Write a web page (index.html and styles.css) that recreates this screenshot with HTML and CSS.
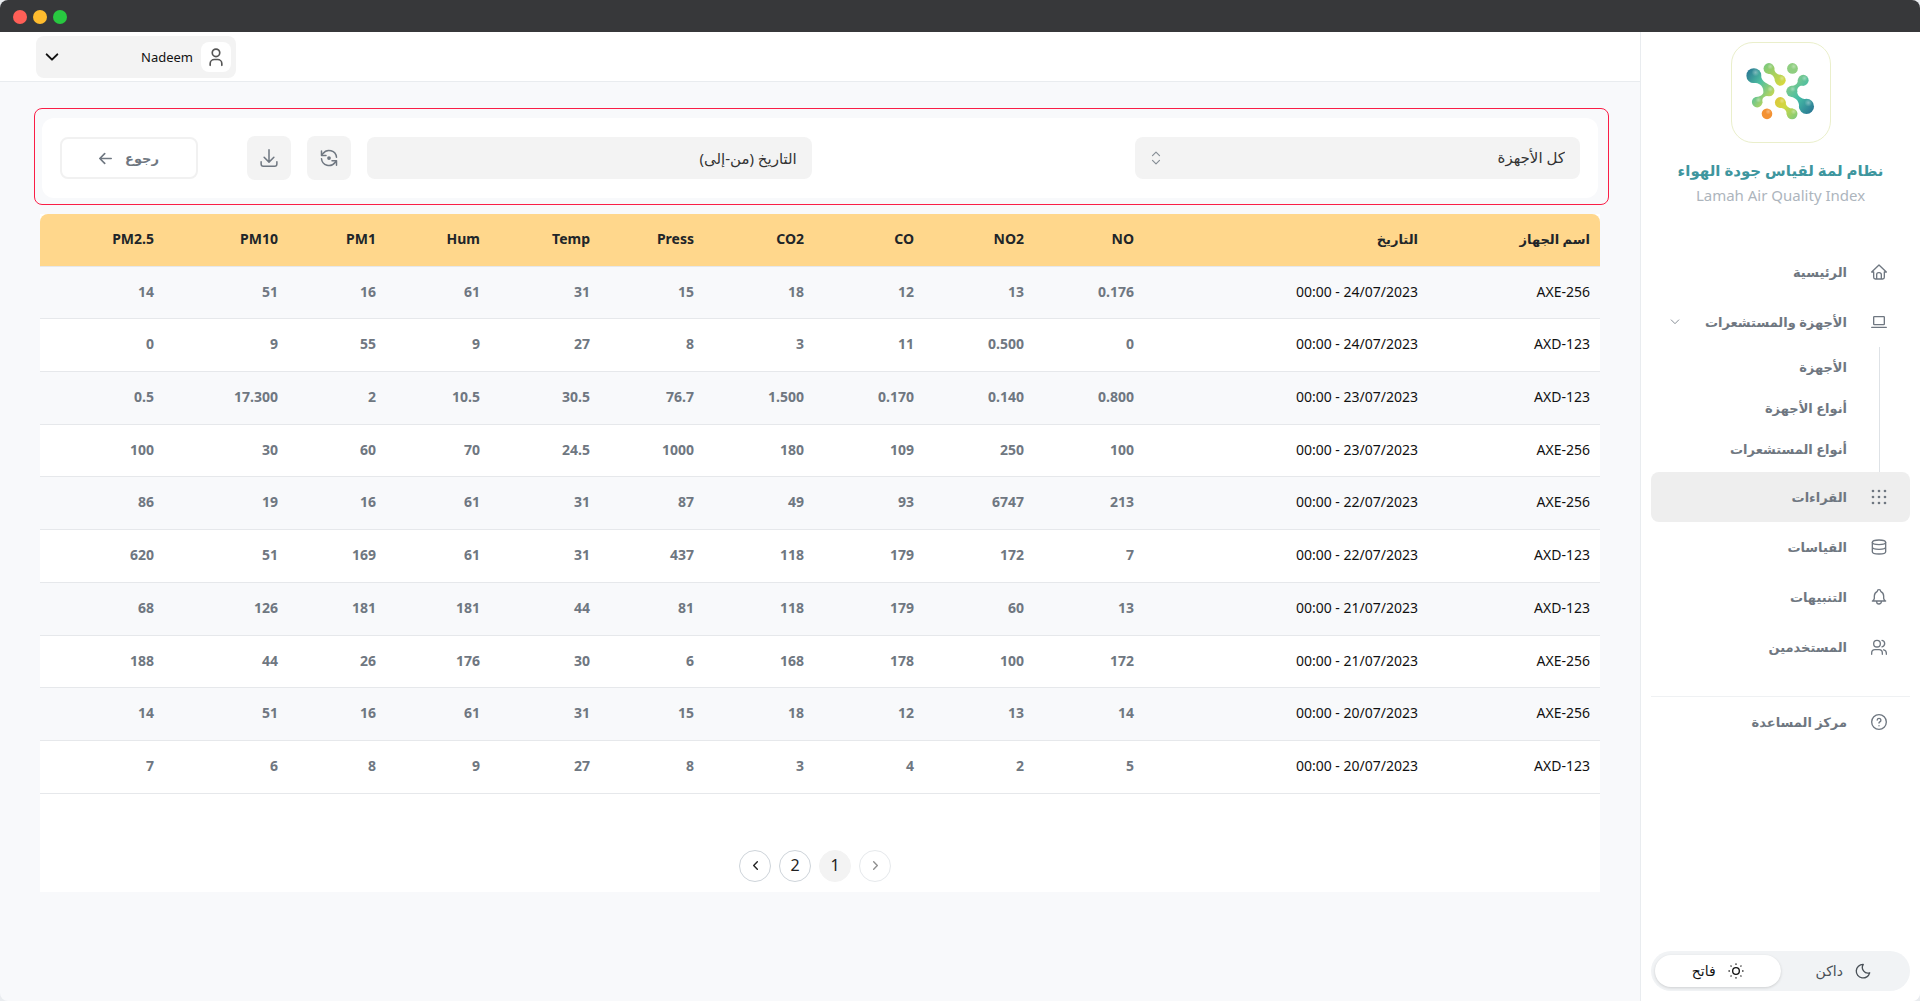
FILE: index.html
```html
<!DOCTYPE html>
<html lang="ar" dir="rtl">
<head>
    <title>نظام لمة لقياس جودة الهواء</title>
    <meta charset="UTF-8">
    <link rel="stylesheet" href="styles.css">
</head>
<body>
    <div class="titlebar">
        <span class="dot green"></span>
        <span class="dot yellow"></span>
        <span class="dot red"></span>
    </div>

    <div class="app">
        <aside class="sidebar">
            <div class="logo">
                <svg viewBox="0 0 100 100" width="98" height="98" aria-hidden="true">
                    <defs>
                        <linearGradient id="g1" gradientUnits="userSpaceOnUse" x1="15" y1="30" x2="43" y2="50">
                            <stop offset="0" stop-color="#2b7a94"/>
                            <stop offset="0.5" stop-color="#4fc0a0"/>
                            <stop offset="1" stop-color="#bcd65a"/>
                        </linearGradient>
                        <linearGradient id="g2" gradientUnits="userSpaceOnUse" x1="34" y1="22" x2="53" y2="42">
                            <stop offset="0" stop-color="#7dc97c"/>
                            <stop offset="1" stop-color="#d9d93c"/>
                        </linearGradient>
                        <linearGradient id="g3" gradientUnits="userSpaceOnUse" x1="57" y1="45" x2="83" y2="68">
                            <stop offset="0" stop-color="#7dc98c"/>
                            <stop offset="0.45" stop-color="#45bda5"/>
                            <stop offset="1" stop-color="#2b7a94"/>
                        </linearGradient>
                        <linearGradient id="g4" gradientUnits="userSpaceOnUse" x1="46" y1="57" x2="66" y2="77">
                            <stop offset="0" stop-color="#dcc83a"/>
                            <stop offset="0.4" stop-color="#cfd944"/>
                            <stop offset="1" stop-color="#7dc97c"/>
                        </linearGradient>
                        <radialGradient id="shine">
                            <stop offset="0" stop-color="#fff" stop-opacity="0.35"/>
                            <stop offset="1" stop-color="#fff" stop-opacity="0"/>
                        </radialGradient>
                    </defs>
                    <g fill="url(#g1)">
                        <circle cx="22.3" cy="33.3" r="7.6"/>
                        <circle cx="37.7" cy="48.8" r="5.6"/>
                        <circle cx="25.7" cy="60.3" r="5.4"/>
                        <path d="M29.6 31.5C29 38 34 41 40 43.7L40 54C33 53 30 56 31 61.5L23.5 55.4C31 55 33 51 32 48C31 43 27 40 20.5 40.7Z"/>
                    </g>
                    <g fill="url(#g2)">
                        <circle cx="37.7" cy="26" r="5.5"/>
                        <circle cx="49.3" cy="38" r="5.5"/>
                        <path d="M43 24.5C43 30 46 32.5 50.5 32.7L44 39.5C43.5 34 41 31.5 36.5 31.3Z"/>
                    </g>
                    <circle cx="61.7" cy="26" r="5.5" fill="#8fce80"/>
                    <g fill="url(#g3)">
                        <circle cx="72.7" cy="38" r="5.5"/>
                        <circle cx="61" cy="49.3" r="5.6"/>
                        <circle cx="76" cy="64.7" r="7.7"/>
                        <path d="M67.2 37C67.5 42 64 44 60 43.8L60 54.8C66 56 69 60 68.5 67L78 57.3C70 58 66 53 66.5 49C66.5 45 69 43 74 43.3Z"/>
                    </g>
                    <g fill="url(#g4)">
                        <circle cx="49.3" cy="60.7" r="5.5"/>
                        <circle cx="61.3" cy="72.3" r="5.5"/>
                        <path d="M54.7 59.5C54.5 64.5 58 67 62.5 67L55.9 73.5C56 68 53 66 48 66Z"/>
                    </g>
                    <circle cx="35.7" cy="72.3" r="5.4" fill="#f39234"/>
                    <g fill="url(#shine)">
                        <circle cx="24" cy="30" r="4"/>
                        <circle cx="39" cy="24" r="3"/>
                        <circle cx="51" cy="36" r="3"/>
                        <circle cx="63" cy="24" r="3"/>
                        <circle cx="74" cy="36" r="3"/>
                        <circle cx="39" cy="47" r="3"/>
                        <circle cx="62" cy="47" r="3"/>
                        <circle cx="27" cy="58" r="3"/>
                        <circle cx="78" cy="61" r="4"/>
                        <circle cx="51" cy="59" r="3"/>
                        <circle cx="63" cy="70" r="3"/>
                        <circle cx="37" cy="70" r="3"/>
                    </g>
                </svg>
            </div>
            <h1 class="brand">نظام لمة لقياس جودة الهواء</h1>
            <p class="brand-sub">Lamah Air Quality Index</p>

            <nav class="nav">
                <a class="nav-item" href="#">
                    <svg class="icon" viewBox="0 0 24 24"><path d="M4 12H1L12 1.5 23 12h-3M4 12v8a2.500 2.500 0 0 0 2.500 2.500h11A2.500 2.500 0 0 0 20 20v-8M8.500 22v-6a3 3 0 0 1 3-3h1a3 3 0 0 1 3 3v6"/></svg>
                    الرئيسية
                </a>
                <a class="nav-item" href="#">
                    <svg class="icon" viewBox="0 0 24 24"><path d="M1 20h22M5 4h14a1 1 0 0 1 1 1v10a1 1 0 0 1-1 1H5a1 1 0 0 1-1-1V5a1 1 0 0 1 1-1z"/></svg>
                    الأجهزة والمستشعرات
                    <svg class="icon arrow" viewBox="0 0 24 24"><path d="M3 7l9 9 9-9"/></svg>
                </a>
                <div class="subnav">
                    <a href="#">الأجهزة</a>
                    <a href="#">أنواع الأجهزة</a>
                    <a href="#">أنواع المستشعرات</a>
                </div>
                <a class="nav-item active" href="#">
                    <svg class="icon dots" viewBox="0 0 24 24"><circle cx="3" cy="3" r="2"/><circle cx="12" cy="3" r="2"/><circle cx="21" cy="3" r="2"/><circle cx="3" cy="12" r="2"/><circle cx="12" cy="12" r="2"/><circle cx="21" cy="12" r="2"/><circle cx="3" cy="21" r="2"/><circle cx="12" cy="21" r="2"/><circle cx="21" cy="21" r="2"/></svg>
                    القراءات
                </a>
                <a class="nav-item" href="#">
                    <svg class="icon" viewBox="0 0 24 24"><ellipse cx="12" cy="5" rx="10" ry="3.500"/><path d="M2 5v14c0 2 4 3.500 10 3.500s10-1.500 10-3.500V5M2 12c0 2 4 3.500 10 3.500s10-1.500 10-3.500"/></svg>
                    القياسات
                </a>
                <a class="nav-item" href="#">
                    <svg class="icon" viewBox="0 0 24 24"><path d="M9.500 3.500a2.500 2.500 0 0 1 5 0A8 8 0 0 1 19 10.500V14a5 5 0 0 0 3 4H2a5 5 0 0 0 3-4v-3.500a8 8 0 0 1 4.500-7M8.500 18v1a3.500 3.500 0 0 0 7 0v-1"/></svg>
                    التنبيهات
                </a>
                <a class="nav-item" href="#">
                    <svg class="icon" viewBox="0 0 24 24"><circle cx="9" cy="7" r="5"/><path d="M1 23v-2a5 5 0 0 1 5-5h6a5 5 0 0 1 5 5v2M16.500 2a5 5 0 0 1 0 9.800M23 23v-2a5 5 0 0 0-4-4.800"/></svg>
                    المستخدمين
                </a>
            </nav>
            <div class="help">
                <a class="nav-item" href="#">
                    <svg class="icon" viewBox="0 0 24 24"><circle cx="12" cy="12" r="11"/><path d="M12 17.500v.1M12 13.500a1.500 1.500 0 0 1 1-1.500 2.800 2.800 0 1 0-3.700-3"/></svg>
                    مركز المساعدة
                </a>
            </div>

            <div class="theme-switch">
                <button type="button">
                    <svg class="icon" viewBox="0 0 24 24"><path d="M12 2h.4a8.500 8.500 0 0 0 9.600 12.700A10.200 10.200 0 1 1 12 2z"/></svg>
                    داكن
                </button>
                <button type="button" class="selected">
                    <svg class="icon" viewBox="0 0 24 24"><circle cx="12" cy="12" r="5"/><path d="M12 1.500v.5M12 22v.5M1.500 12h.5M22 12h.5M4.500 4.500l.2.2M19.300 19.300l.2.2M4.500 19.500l.2-.2M19.300 4.700l.2-.2"/></svg>
                    فاتح
                </button>
            </div>
        </aside>

        <div class="content">
            <header class="topbar">
                <button type="button" class="user">
                    <span class="avatar">
                        <svg class="icon" viewBox="0 0 24 24"><circle cx="12" cy="7" r="4.500"/><path d="M5 22v-2a5 5 0 0 1 5-5h4a5 5 0 0 1 5 5v2"/></svg>
                    </span>
                    <span class="user-name">Nadeem</span>
                    <svg class="icon" viewBox="0 0 24 24"><path d="M4 8l8 8 8-8"/></svg>
                </button>
            </header>

            <main>
                <div class="frame">
                    <form class="filters">
                        <div class="select-box">
                            <select aria-label="الجهاز">
                                <option>كل الأجهزة</option>
                                <option>AXE-256</option>
                                <option>AXD-123</option>
                            </select>
                            <svg class="icon" viewBox="0 0 24 24"><path d="M6 8l6-6 6 6M6 16l6 6 6-6"/></svg>
                        </div>
                        <input class="date" type="text" placeholder="التاريخ (من-إلى)" aria-label="التاريخ">
                        <div class="actions">
                            <button type="button" class="square" aria-label="تحديث">
                                <svg class="icon" viewBox="0 0 24 24"><path d="M22 11A10 10 0 0 0 4 6L2 8M2 2.500V8.500h6M2 13a10 10 0 0 0 18 5l2-2M22 21.500V15.500h-6"/><circle cx="12" cy="12" r="1.500" fill="currentColor"/></svg>
                            </button>
                            <button type="button" class="square" aria-label="تنزيل">
                                <svg class="icon" viewBox="0 0 24 24"><path d="M1.500 17v3a3 3 0 0 0 3 3h15a3 3 0 0 0 3-3v-3M5.500 11l6.500 6.500 6.500-6.500M12 1v16"/></svg>
                            </button>
                            <button type="button" class="back">
                                رجوع
                                <svg class="icon" viewBox="0 0 24 24"><path d="M1.500 12h21M1.500 12l9 9M1.500 12l9-9"/></svg>
                            </button>
                        </div>
                    </form>
                </div>

                <section class="card">
                    <table>
                        <colgroup>
                            <col class="c-name"><col class="c-date"><col class="c-wide"><col class="c-wide">
                            <col class="c-wide"><col class="c-wide"><col class="c-mid"><col class="c-wide">
                            <col class="c-mid"><col class="c-narrow"><col class="c-pm"><col class="c-pm">
                        </colgroup>
                        <thead>
                            <tr>
                                <th class="ar">اسم الجهاز</th><th class="ar">التاريخ</th><th>NO</th><th>NO2</th><th>CO</th><th>CO2</th>
                                <th>Press</th><th>Temp</th><th>Hum</th><th>PM1</th><th>PM10</th><th>PM2.5</th>
                            </tr>
                        </thead>
                        <tbody>
                            <tr><td>AXE-256</td><td>24/07/2023 - 00:00</td><td>0.176</td><td>13</td><td>12</td><td>18</td><td>15</td><td>31</td><td>61</td><td>16</td><td>51</td><td>14</td></tr>
                            <tr><td>AXD-123</td><td>24/07/2023 - 00:00</td><td>0</td><td>0.500</td><td>11</td><td>3</td><td>8</td><td>27</td><td>9</td><td>55</td><td>9</td><td>0</td></tr>
                            <tr><td>AXD-123</td><td>23/07/2023 - 00:00</td><td>0.800</td><td>0.140</td><td>0.170</td><td>1.500</td><td>76.7</td><td>30.5</td><td>10.5</td><td>2</td><td>17.300</td><td>0.5</td></tr>
                            <tr><td>AXE-256</td><td>23/07/2023 - 00:00</td><td>100</td><td>250</td><td>109</td><td>180</td><td>1000</td><td>24.5</td><td>70</td><td>60</td><td>30</td><td>100</td></tr>
                            <tr><td>AXE-256</td><td>22/07/2023 - 00:00</td><td>213</td><td>6747</td><td>93</td><td>49</td><td>87</td><td>31</td><td>61</td><td>16</td><td>19</td><td>86</td></tr>
                            <tr><td>AXD-123</td><td>22/07/2023 - 00:00</td><td>7</td><td>172</td><td>179</td><td>118</td><td>437</td><td>31</td><td>61</td><td>169</td><td>51</td><td>620</td></tr>
                            <tr><td>AXD-123</td><td>21/07/2023 - 00:00</td><td>13</td><td>60</td><td>179</td><td>118</td><td>81</td><td>44</td><td>181</td><td>181</td><td>126</td><td>68</td></tr>
                            <tr><td>AXE-256</td><td>21/07/2023 - 00:00</td><td>172</td><td>100</td><td>178</td><td>168</td><td>6</td><td>30</td><td>176</td><td>26</td><td>44</td><td>188</td></tr>
                            <tr><td>AXE-256</td><td>20/07/2023 - 00:00</td><td>14</td><td>13</td><td>12</td><td>18</td><td>15</td><td>31</td><td>61</td><td>16</td><td>51</td><td>14</td></tr>
                            <tr><td>AXD-123</td><td>20/07/2023 - 00:00</td><td>5</td><td>2</td><td>4</td><td>3</td><td>8</td><td>27</td><td>9</td><td>8</td><td>6</td><td>7</td></tr>
                        </tbody>
                    </table>

                    <div class="pagination">
                        <button type="button" disabled aria-label="السابق"><svg class="icon" viewBox="0 0 24 24"><path d="M8 4l8 8-8 8"/></svg></button>
                        <button type="button" class="current">1</button>
                        <button type="button">2</button>
                        <button type="button" aria-label="التالي"><svg class="icon" viewBox="0 0 24 24"><path d="M16 4l-8 8 8 8"/></svg></button>
                    </div>
                </section>
            </main>
        </div>
    </div>
</body>
</html>
```
FILE: styles.css
```css
* {
    box-sizing: border-box;
}
html {
    background-color: #e9ecef;
}
body {
    margin: 0;
    min-height: 100vh;
    display: flex;
    flex-direction: column;
    overflow: hidden;
    border-radius: 8px;
    background-color: #f8f9fb;
    font-family: "Noto Sans", "DejaVu Sans", sans-serif;
    font-size: 14px;
    line-height: 1.55;
    color: #111;
}
button, input, select {
    font: inherit;
    color: inherit;
    border: none;
}
button {
    display: flex;
    align-items: center;
    justify-content: center;
    padding: 0;
    cursor: pointer;
}
a {
    color: inherit;
    text-decoration: none;
}
.icon {
    width: 16px;
    height: 16px;
    flex: none;
    fill: none;
    stroke: currentColor;
    stroke-width: 2;
    stroke-linecap: round;
    stroke-linejoin: round;
}

/* window bar */
.titlebar {
    height: 32px;
    padding: 2px 13px 0;
    display: flex;
    align-items: center;
    justify-content: flex-end;
    gap: 6px;
    background-color: #37383a;
}
.dot {
    width: 14px;
    height: 14px;
    border-radius: 50%;
}
.red { background-color: #ff5f57; }
.yellow { background-color: #febc2e; }
.green { background-color: #28c840; }

.app {
    flex: 1;
    display: flex;
}

/* sidebar */
.sidebar {
    width: 280px;
    flex: none;
    padding: 10px;
    display: flex;
    flex-direction: column;
    background-color: #fff;
    border-left: 1px solid #e9ecef;
    color: #6f7781;
}
.logo {
    width: 100px;
    height: 101px;
    align-self: center;
    border: 1px solid #eaefcb;
    border-radius: 22px;
}
.brand {
    margin: 14px 0 0;
    font-size: 15px;
    line-height: 26px;
    text-align: center;
    color: #3e969e;
}
.brand-sub {
    margin: 0;
    font-size: 15px;
    line-height: 25px;
    text-align: center;
    color: #adb5bd;
}
.nav {
    margin-top: 39px;
}
.nav-item {
    display: flex;
    align-items: center;
    gap: 24px;
    height: 50px;
    padding: 0 23px;
    border-radius: 8px;
    font-size: 13px;
    line-height: 18px;
    font-weight: bold;
}
.arrow {
    width: 10px;
    height: 10px;
    margin-inline-start: auto;
    margin-inline-end: -4px;
}
.dots {
    fill: currentColor;
    stroke: none;
}
.active {
    background-color: #eee;
}
.subnav {
    margin-inline-start: 30px;
    padding-inline-start: 32px;
    padding-bottom: 2px;
    border-inline-start: 1px solid #dee2e6;
    font-size: 13px;
    font-weight: bold;
}
.subnav a {
    display: block;
    line-height: 41px;
}
.help {
    margin-top: 24px;
    border-top: 1px solid #eff1f3;
}
.theme-switch {
    margin-top: auto;
    padding: 4px;
    display: grid;
    grid-template-columns: 1fr 1fr;
    border-radius: 20px;
    background-color: #f1f3f5;
    color: #495057;
}
.theme-switch button {
    gap: 12px;
    height: 32px;
    border-radius: 16px;
    background: none;
}
.theme-switch .selected {
    background-color: #fff;
    color: #111;
    box-shadow: 0 1px 3px rgba(0, 0, 0, 0.15);
}

/* top bar */
.content {
    flex: 1;
    min-width: 0;
}
.topbar {
    height: 50px;
    padding: 4px 36px;
    display: flex;
    justify-content: flex-end;
    background-color: #fff;
    border-bottom: 1px solid #e9ecef;
}
.user {
    width: 200px;
    height: 42px;
    padding: 0 5px 0 8px;
    gap: 8px;
    border-radius: 8px;
    background-color: #f3f3f3;
}
.user-name {
    flex: 1;
    font-size: 13px;
    text-align: start;
}
.avatar {
    width: 30px;
    height: 30px;
    display: flex;
    align-items: center;
    justify-content: center;
    border-radius: 8px;
    background-color: #fff;
    color: #555;
}
.avatar .icon {
    width: 20px;
    height: 20px;
}
.user > .icon {
    stroke-width: 3;
}

/* filters */
main {
    padding: 26px 40px;
}
.frame {
    margin: 0 -9px 0 -6px;
    padding: 9px 10px 6px 7px;
    border: 1px solid #fa1e46;
    border-radius: 8px;
}
.filters {
    padding: 18px;
    display: grid;
    grid-template-columns: 11fr 8fr 11fr auto;
    align-items: center;
    border-radius: 12px;
    background-color: #fff;
}
.select-box {
    display: grid;
    align-items: center;
}
.select-box select, .select-box .icon {
    grid-area: 1 / 1;
}
.select-box .icon {
    justify-self: end;
    width: 14px;
    height: 14px;
    margin-inline-end: 14px;
    color: #868e96;
    pointer-events: none;
}
.select-box select, .date {
    width: 100%;
    height: 42px;
    padding: 0 15px;
    border-radius: 8px;
    background-color: #f3f3f3;
    color: #333;
    font-size: 15px;
    appearance: none;
}
.date {
    grid-column: 3;
}
.date::placeholder {
    color: #333;
}
.actions {
    display: flex;
    align-items: center;
    gap: 16px;
    padding-inline-start: 16px;
    color: #6f7781;
}
.square {
    width: 44px;
    height: 44px;
    border-radius: 8px;
    background-color: #f3f3f3;
}
.square .icon {
    width: 18px;
    height: 18px;
}
.back {
    width: 138px;
    height: 42px;
    margin-inline-start: 33px;
    gap: 13px;
    border: 2px solid #f1f1f1;
    border-radius: 8px;
    background-color: #fff;
    font-size: 13px;
    font-weight: bold;
}
.back .icon {
    width: 13px;
    height: 13px;
    stroke-width: 3;
}

/* readings table */
.card {
    margin-top: 9px;
    background-color: #fff;
}
table {
    width: 100%;
    table-layout: fixed;
    border-collapse: separate;
    border-spacing: 0;
}
.c-name { width: 172px; }
.c-date { width: 284px; }
.c-wide { width: 110px; }
.c-mid { width: 104px; }
.c-narrow { width: 98px; }
.c-pm { width: 124px; }
th, td {
    padding: 14px 10px 16px;
    text-align: right;
    border-bottom: 1px solid #e6e8eb;
}
th {
    background-color: #ffd78c;
    color: #212529;
}
th.ar {
    font-size: 13px;
}
th:first-child {
    border-top-right-radius: 8px;
}
th:last-child {
    border-top-left-radius: 8px;
}
tbody tr:nth-child(odd) {
    background-color: #f8f9fb;
}
td:nth-child(n+3) {
    font-weight: bold;
    color: #6f7781;
}

/* pagination */
.pagination {
    display: flex;
    justify-content: center;
    gap: 8px;
    padding: 56px 10px 10px 0;
}
.pagination button {
    width: 32px;
    height: 32px;
    border: 1px solid #ced4da;
    border-radius: 50%;
    background-color: #fff;
    font-size: 16px;
    color: #222;
}
.pagination .current {
    border-color: #f3f3f3;
    background-color: #f3f3f3;
}
.pagination button:disabled {
    opacity: 0.5;
}
.pagination .icon {
    width: 11px;
    height: 11px;
    stroke-width: 3;
}
```
